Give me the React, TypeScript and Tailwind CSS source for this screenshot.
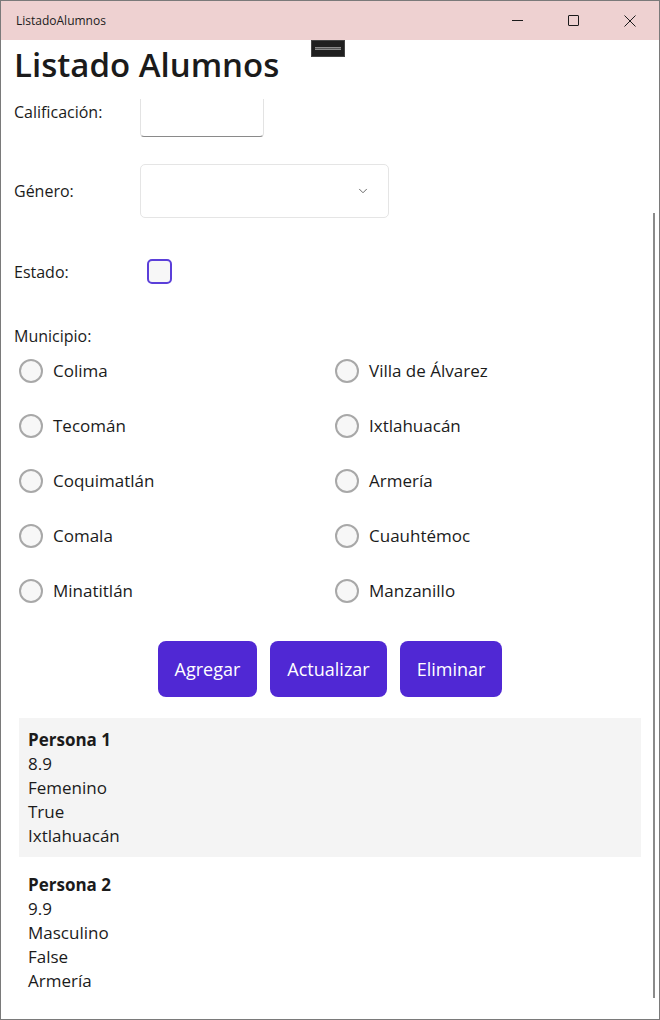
import { ChevronDown } from "lucide-react";

const municipios = [
  ["Colima", "Villa de Álvarez"],
  ["Tecomán", "Ixtlahuacán"],
  ["Coquimatlán", "Armería"],
  ["Comala", "Cuauhtémoc"],
  ["Minatitlán", "Manzanillo"],
];

const personas = [
  { nombre: "Persona 1", calificacion: "8.9", genero: "Femenino", estado: "True", municipio: "Ixtlahuacán", shaded: true },
  { nombre: "Persona 2", calificacion: "9.9", genero: "Masculino", estado: "False", municipio: "Armería", shaded: false },
];

function Radio({ label }: { label: string }) {
  return (
    <div className="flex h-[55px] items-center gap-[10px]">
      <span className="h-[24px] w-[24px] rounded-full border-2 border-[#a8a8a8] bg-[#f7f7f7]" />
      <span className="text-[17px]">{label}</span>
    </div>
  );
}

export default function App() {
  return (
    <div
      className="flex h-[1020px] w-[660px] flex-col overflow-hidden border border-[#7a7a7a] bg-white text-[#1b1b1b]"
      style={{ fontFamily: '"Open Sans", "Noto Sans", sans-serif' }}
    >
      {/* title bar */}
      <div className="flex h-[39px] shrink-0 items-center bg-[#eed1d1]">
        <span className="pl-[15px] text-[12px]">ListadoAlumnos</span>
        <div className="ml-auto flex h-full items-center">
          <div className="flex h-full w-[56px] items-center justify-center">
            <span className="h-px w-[11px] bg-[#1b1b1b]" />
          </div>
          <div className="flex h-full w-[56px] items-center justify-center">
            <span className="h-[11px] w-[11px] rounded-[1px] border border-[#1b1b1b]" />
          </div>
          <div className="flex h-full w-[58px] items-center justify-center">
            <svg width="12" height="12" viewBox="0 0 12 12" stroke="#1b1b1b" strokeWidth="1">
              <path d="M0.5 0.5 L11.5 11.5 M11.5 0.5 L0.5 11.5" />
            </svg>
          </div>
        </div>
      </div>

      {/* content */}
      <div className="relative flex-1 pl-[13px] pr-[18px]">
        <div className="absolute left-[310px] top-0 flex h-[17px] w-[34px] items-center justify-center border border-[#444] bg-[#1f1f1f]">
          <span className="h-[3px] w-[26px] border-y border-[#8a8a8a] bg-[#555]" />
        </div>
        <div className="absolute right-[4px] top-[173px] h-[785px] w-[2px] bg-[#8b8b8b]" />

        <h1 className="h-[59px] pt-[2px] text-[33px] font-semibold leading-[46px]">Listado Alumnos</h1>

        <div className="flex h-[38px] items-start">
          <span className="w-[126px] pt-[1px] text-[16px] leading-[24px]">Calificación:</span>
          <div className="h-[38px] w-[124px] rounded-b-[4px] border-x border-b border-x-[#e3e3e3] border-b-[#8a8a8a]" />
        </div>

        <div className="mt-[27px] flex h-[54px] items-center">
          <span className="w-[126px] text-[16px]">Género:</span>
          <div className="flex h-[54px] w-[249px] items-center justify-end rounded-[5px] border border-[#e5e5e5] pr-[18px]">
            <ChevronDown size={14} strokeWidth={1.5} className="text-[#555]" />
          </div>
        </div>

        <div className="mt-[41px] flex h-[25px] items-center">
          <span className="w-[133px] text-[16px]">Estado:</span>
          <span className="h-[25px] w-[25px] rounded-[5px] border-2 border-solid border-[color:#5b3fd9] bg-[#f7f7f7]" />
        </div>

        <div className="mt-[40px] text-[16px] leading-[24px]">Municipio:</div>

        <div className="ml-[5px] mt-[-5px] grid grid-cols-[316px_1fr]">
          {municipios.map(([a, b]) => (
            <div key={a} className="contents">
              <Radio label={a} />
              <Radio label={b} />
            </div>
          ))}
        </div>

        <div className="mt-[23px] flex justify-center gap-[13px] pl-[5px]">
          {["Agregar", "Actualizar", "Eliminar"].map((b) => (
            <button
              key={b}
              className="h-[56px] rounded-[8px] bg-[#5028d4] px-[17px] text-[18px] text-white"
            >
              {b}
            </button>
          ))}
        </div>

        <div className="ml-[5px] mt-[21px] flex flex-col gap-[6px]">
          {personas.map((p) => (
            <div
              key={p.nombre}
              className={`flex h-[139px] flex-col justify-center px-[9px] text-[17px] leading-[24px] ${p.shaded ? "bg-[#f4f4f4]" : ""}`}
            >
              <span className="font-bold">{p.nombre}</span>
              <span>{p.calificacion}</span>
              <span>{p.genero}</span>
              <span>{p.estado}</span>
              <span>{p.municipio}</span>
            </div>
          ))}
        </div>
      </div>
    </div>
  );
}
